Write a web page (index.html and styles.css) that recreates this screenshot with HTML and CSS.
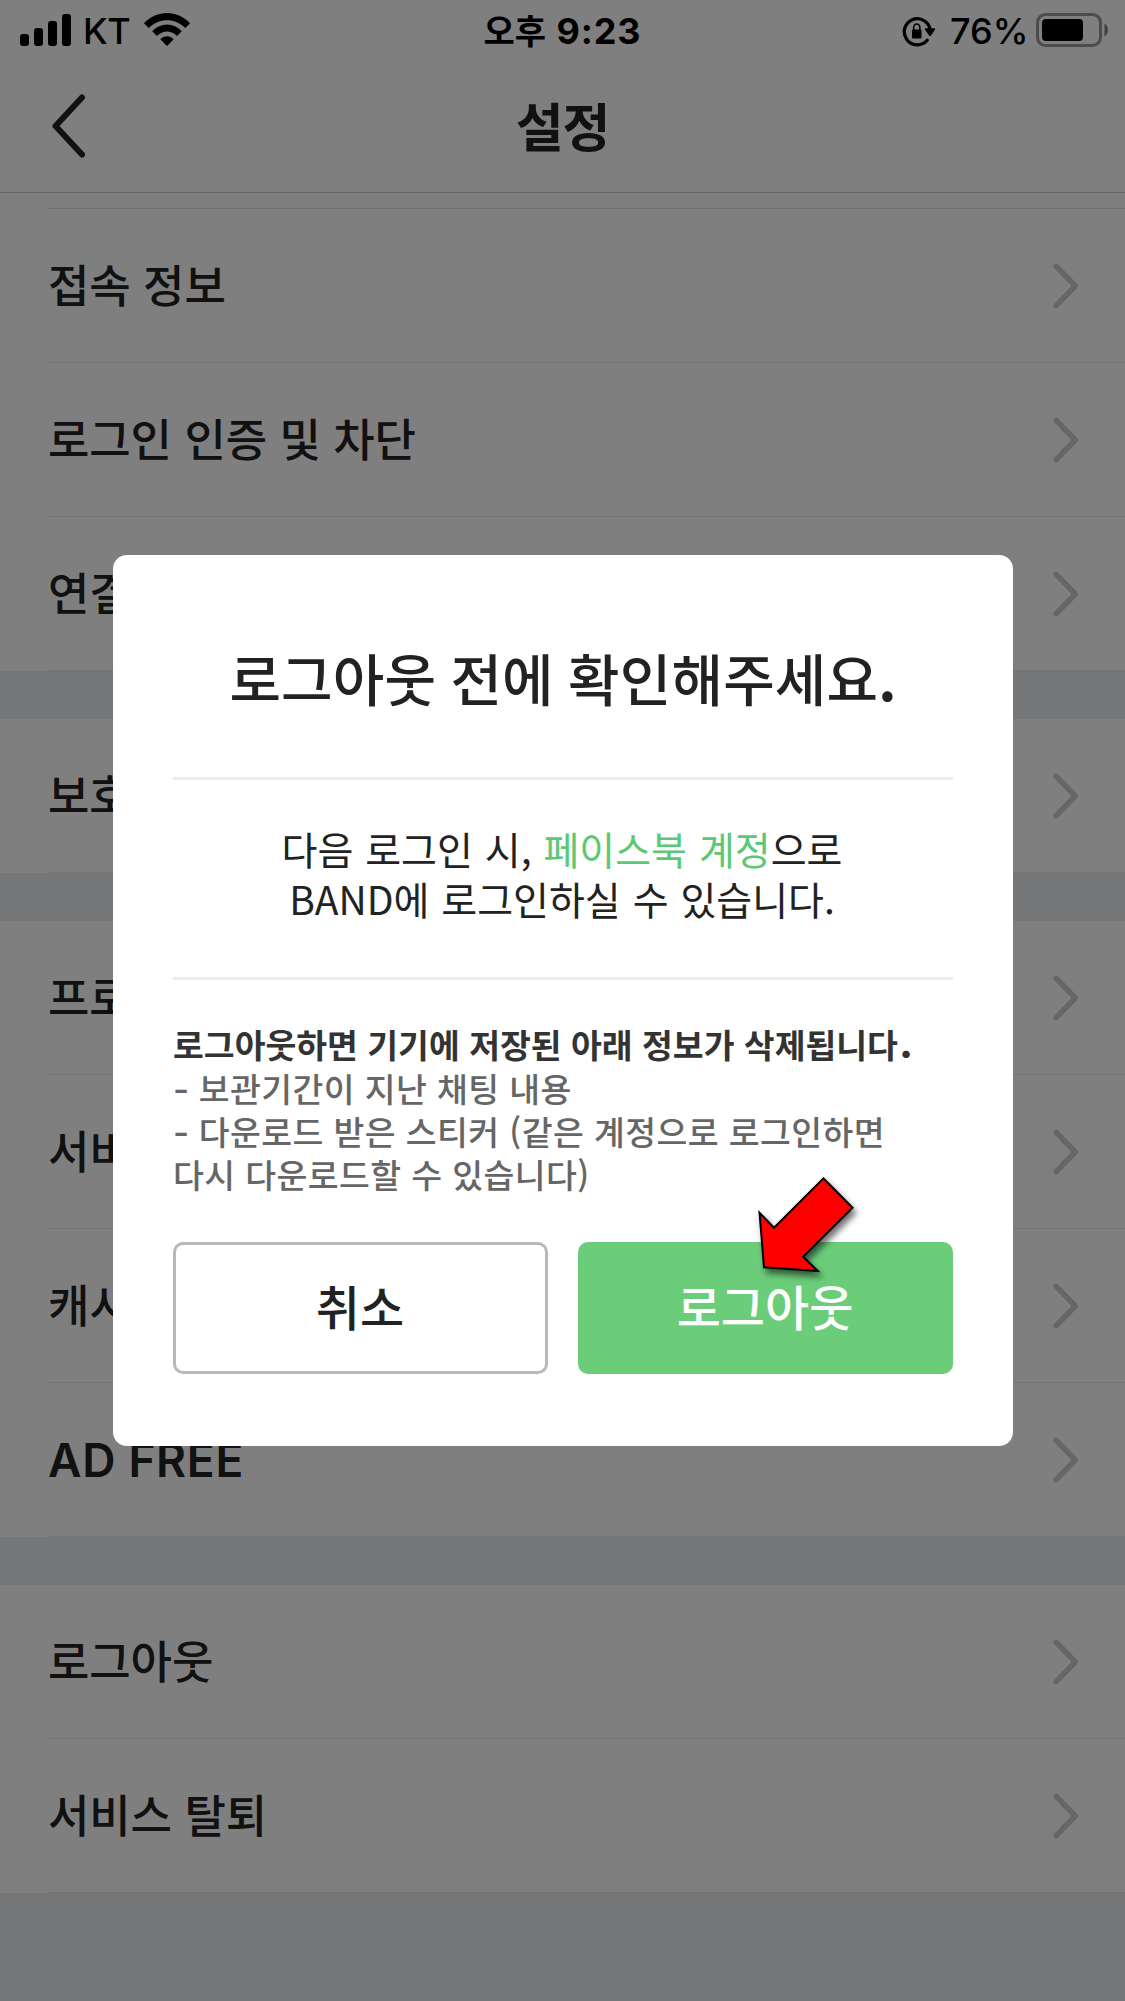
FILE: index.html
```html
<!DOCTYPE html>
<html lang="ko">
<head>
<meta charset="utf-8">
<title>설정</title>
<link rel="stylesheet" href="styles.css">
</head>
<body>
<svg class="defs" aria-hidden="true">
  <symbol id="chevron" viewBox="0 0 26 48"><path d="M3 4.200 22.300 24 3 43.800" fill="none" stroke="#ccc" stroke-width="5.500" stroke-linecap="round" stroke-linejoin="round"/></symbol>
</svg>
<div class="screen">
  <div class="status">
    <div class="status-left">
      <svg class="signal" width="51" height="32" viewBox="0 0 51 32"><rect y="20" width="9" height="12" rx="3"/><rect x="14" y="14" width="9" height="18" rx="3"/><rect x="28" y="7" width="9" height="25" rx="3"/><rect x="42" width="9" height="32" rx="3"/></svg>
      <span class="carrier">KT</span>
      <svg class="wifi" width="46" height="33" viewBox="0 0 46 33"><path d="M0 10.200C13-3.400 33-3.400 46 10.200L41.300 15C31 4.600 15 4.600 4.700 15Z"/><path d="M8.200 18.300C16.500 9.200 29.500 9.200 37.800 18.300L33 23C27.500 17 18.500 17 13 23Z"/><path d="M16.300 26.300C20 22.200 26 22.200 29.700 26.300L23 33Z"/></svg>
    </div>
    <div class="clock"><span class="ampm">오후</span><span class="time">9:23</span></div>
    <div class="status-right">
      <svg class="lock" width="34" height="32" viewBox="0 0 34 32"><path d="M25.200 24.200A13 13 0 1 1 28 13" fill="none" stroke="#000" stroke-width="3.300" stroke-linecap="round"/><path d="M23.500 12.200H32.600Q33.600 12.500 33 13.500L29 19.500Q28 20.500 27 19.500L23 13.500Q22.600 12.400 23.500 12.200Z"/><rect x="10" y="13.500" width="9.500" height="9" rx="1.300"/><path d="M11.700 14.500V11.500a3.050 3.500 0 0 1 6.100 0V14.500" fill="none" stroke="#000" stroke-width="1.600"/></svg>
      <span class="percent">76%</span>
      <svg class="battery" width="74" height="34" viewBox="0 0 74 34"><rect x="1.500" y="1.500" width="63" height="31" rx="8" fill="none" stroke="#000" stroke-opacity=".4" stroke-width="3"/><rect x="6" y="6" width="41" height="22" rx="4"/><path d="M68.500 10.500C73 13 73 21 68.500 23.500Z" fill-opacity=".5"/></svg>
    </div>
  </div>
  <header class="nav">
    <svg class="back" width="33" height="64" viewBox="0 0 33 64"><path d="M30 3.500 3.500 32 30 60.500" fill="none" stroke="#222" stroke-width="6" stroke-linecap="round" stroke-linejoin="round"/></svg>
    <h1>설정</h1>
  </header>
  <ul class="group first">
    <li><span>접속 정보</span><svg><use href="#chevron"/></svg></li>
    <li><span>로그인 인증 및 차단</span><svg><use href="#chevron"/></svg></li>
    <li><span>연결</span><svg><use href="#chevron"/></svg></li>
  </ul>
  <ul class="group">
    <li><span>보호</span><svg><use href="#chevron"/></svg></li>
  </ul>
  <ul class="group">
    <li><span>프로</span><svg><use href="#chevron"/></svg></li>
    <li><span>서비</span><svg><use href="#chevron"/></svg></li>
    <li><span>캐시</span><svg><use href="#chevron"/></svg></li>
    <li><span class="latin">AD FREE</span><svg><use href="#chevron"/></svg></li>
  </ul>
  <ul class="group">
    <li><span>로그아웃</span><svg><use href="#chevron"/></svg></li>
    <li><span>서비스 탈퇴</span><svg><use href="#chevron"/></svg></li>
  </ul>
  <div class="overlay">
    <section class="dialog" role="dialog">
      <h2>로그아웃 전에 확인해주세요<b>.</b></h2>
      <p class="message"><span class="line">다음 로그인 시, <em>페이스북 계정</em>으로</span><span class="line">BAND에 로그인하실 수 있습니다.</span></p>
      <div class="notice">
        <strong>로그아웃하면 기기에 저장된 아래 정보가 삭제됩니다<i>.</i></strong>
        <p><b>-</b> 보관기간이 지난 채팅 내용</p>
        <p><b>-</b> 다운로드 받은 스티커 (같은 계정으로 로그인하면<br>다시 다운로드할 수 있습니다)</p>
      </div>
      <div class="actions">
        <button class="cancel">취소</button>
        <button class="confirm">로그아웃</button>
      </div>
      <svg class="pointer" width="120" height="120" viewBox="750 1170 120 120"><path d="M823.400 1178.300 852.600 1207.700 803.200 1256.700 817.800 1271 764 1267.300 759.500 1212.700 774 1227.700Z" fill="#f00" stroke="#000" stroke-width="2"/></svg>
    </section>
  </div>
</div>
</body>
</html>
```
FILE: styles.css
```css
* { box-sizing: border-box; margin: 0; padding: 0; }

body {
  width: 1125px;
  height: 2001px;
  overflow: hidden;
  background: #ebecf0;
  color: #222;
  font-family: "Noto Sans CJK KR", sans-serif;
}

.defs { position: absolute; width: 0; height: 0; }

.screen {
  position: relative;
  height: 2001px;
  overflow: hidden;
}

.status {
  display: grid;
  grid-template-columns: 1fr auto 1fr;
  height: 60px;
  background: #fff;
  color: #000;
  font: 500 36px/60px Inter, "Noto Sans CJK KR", sans-serif;
}

.status-left, .status-right { display: flex; align-items: flex-start; }
.status-left { padding-left: 20px; }
.status-right { justify-content: flex-end; padding-right: 15px; }
.signal { margin-top: 14px; }
.carrier { margin-left: 12px; width: 45px; line-height: 63px; font-weight: 500; letter-spacing: -.6px; }
.wifi { margin: 13px 0 0 16px; }
.clock { display: flex; line-height: 63px; }
.ampm { width: 73px; font: 700 34px/60px "Noto Sans CJK KR", sans-serif; }
.time { font-weight: 700; letter-spacing: .9px; }
.lock { margin-top: 16px; }
.percent { width: 79px; margin: 0 7px 0 14px; line-height: 63px; font-weight: 500; letter-spacing: 0; white-space: nowrap; }
.battery { margin-top: 13px; }

.nav {
  display: grid;
  grid-template-columns: 1fr auto 1fr;
  height: 133px;
  padding: 0 52px;
  background: #fff;
  border-bottom: 1px solid #ccc;
}
.back { margin-top: 33.5px; }
h1 { font-size: 52px; line-height: 130px; font-weight: 700; letter-spacing: -1px; }

.group { list-style: none; background: #fff; margin-bottom: 48px; }
.group li {
  display: flex;
  align-items: center;
  justify-content: space-between;
  height: 154px;
  padding-right: 46px;
  margin-left: 48px;
  border-bottom: 1px solid #e8e8e8;
  font-size: 45px;
  line-height: 66px;
  font-weight: 500;
  letter-spacing: -.1px;
}
.group li span { padding-bottom: 4px; }
.group li svg { width: 26px; height: 48px; }
.group.first::before {
  content: "";
  display: block;
  height: 15px;
  margin-left: 48px;
  border-bottom: 1px solid #e3e3e3;
}
.group li .latin {
  padding-bottom: 0;
  font-family: Inter, sans-serif;
  font-size: 46px;
  font-weight: 600;
  letter-spacing: .7px;
}

.overlay {
  position: absolute;
  inset: 0;
  display: flex;
  align-items: center;
  justify-content: center;
  background: rgba(0, 0, 0, .5);
}

.dialog {
  position: relative;
  left: .5px;
  width: 900px;
  height: 891px;
  padding: 0 60px;
  border-radius: 14px;
  background: #fff;
}

h2 {
  height: 225px;
  padding-top: 81px;
  border-bottom: 3px solid #ebebeb;
  text-align: center;
  white-space: nowrap;
  font-size: 56px;
  line-height: 82px;
  font-weight: 500;
  letter-spacing: .15px;
  word-spacing: -1.500px;
}
h2 b { font-weight: 700; }

.message {
  height: 200px;
  padding: 43px 2px 0 0;
  border-bottom: 3px solid #ebebeb;
  font-size: 39px;
  line-height: 50px;
  font-weight: 400;
  text-align: center;
  white-space: nowrap;
  word-spacing: 1px;
}
.message .line { display: block; }
em { font-style: normal; color: #5bc873; }

.notice {
  padding-top: 42px;
  height: 262px;
  font-size: 33.5px;
  line-height: 43px;
  color: #666;
  white-space: nowrap;
}
.notice strong { display: block; margin-bottom: 1px; color: #333; font-weight: 700; }
.notice i { margin-left: 1px; font: 800 40px/1 Inter, sans-serif; }
.notice p { font-weight: 500; letter-spacing: .42px; }
.notice b { display: inline-block; width: 16px; font: 500 35px/1 Inter, sans-serif; }

.actions { display: grid; grid-template-columns: 1fr 1fr; gap: 30px; }
.actions button {
  height: 132px;
  padding: 0 1px 6px 0;
  border: 3px solid #b8b8b8;
  border-radius: 10px;
  background: #fff;
  color: #222;
  font: 500 48px/116px "Noto Sans CJK KR", sans-serif;
}
.actions .confirm { border-color: #6bcd79; background: #6bcd79; color: #fff; }

.pointer {
  position: absolute;
  left: 637px;
  top: 615px;
  filter: drop-shadow(3px 5px 3px rgba(0, 0, 0, .55));
}
```
